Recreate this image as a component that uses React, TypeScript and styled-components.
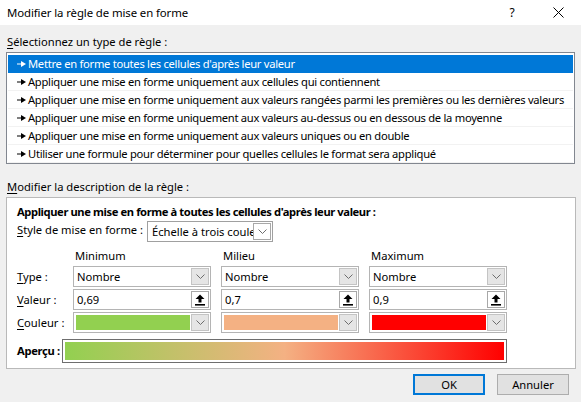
import React from "react";
import styled, { createGlobalStyle } from "styled-components";

const FONT = `"Noto Sans", "Liberation Sans", sans-serif`;

const Global = createGlobalStyle`
  html, body { margin: 0; padding: 0; background: #f0f0f0; }
  body { font-family: ${FONT}; font-size: 11.2px; color: #000; }
  * { box-sizing: border-box; }
`;

const Dialog = styled.div`
  width: 581px;
  height: 402px;
  display: flex;
  flex-direction: column;
  background: #f0f0f0;
  overflow: hidden;
`;

const TitleBar = styled.div`
  height: 25px;
  flex-shrink: 0;
  background: #fff;
  display: flex;
  align-items: center;
  padding-left: 7px;
`;

const Title = styled.div`
  flex: 1;
  font-size: 11.4px;
  letter-spacing: -0.1px;
  line-height: 16px;
`;

const TitleButton = styled.div`
  width: 46px;
  height: 25px;
  display: flex;
  align-items: center;
  justify-content: center;
  font-size: 12px;
`;

const Body = styled.div`
  display: flex;
  flex-direction: column;
  padding: 0 5px 0 6px;
`;

const SectionLabel = styled.div<{ $top: number }>`
  margin-top: ${(p) => p.$top}px;
  padding-left: 1px;
  line-height: 16px;
  height: 16px;
  white-space: nowrap;
`;

const ListBox = styled.div`
  margin-top: 2px;
  margin-right: 1px;
  height: 112px;
  background: #fff;
  border: 1px solid #828790;
  padding: 2px 1px 1px 1px;
  display: flex;
  flex-direction: column;
`;

const ListRow = styled.div<{ $selected?: boolean }>`
  height: 18px;
  flex-shrink: 0;
  display: flex;
  align-items: center;
  gap: 2px;
  padding-left: 9px;
  white-space: nowrap;
  overflow: hidden;
  letter-spacing: -0.28px;
  background: ${(p) => (p.$selected ? "#0078d7" : "#fff")};
  color: ${(p) => (p.$selected ? "#fff" : "#000")};
  border-bottom: 1px solid ${(p) => (p.$selected ? "#0078d7" : "#f2f2f2")};
  line-height: 16px;
`;

const Group = styled.div`
  margin-top: 2px;
  height: 172px;
  background: #fff;
  border: 1px solid #b9b9b9;
  padding: 6px 0 0 10px;
  display: flex;
  flex-direction: column;
`;

const GroupTitle = styled.div`
  font-weight: bold;
  letter-spacing: -0.4px;
  line-height: 16px;
  height: 16px;
  white-space: nowrap;
`;

const StyleRow = styled.div`
  margin-top: 1px;
  display: flex;
  align-items: center;
  height: 21px;
`;

const StyleLabel = styled.div`
  width: 130px;
  line-height: 16px;
  margin-top: -3px;
  white-space: nowrap;
`;

const Select = styled.div`
  width: 126px;
  height: 21px;
  border: 1px solid #a0a0a0;
  background: #fff;
  display: flex;
  align-items: center;
  overflow: hidden;
`;

const SelectText = styled.div`
  flex: 1;
  overflow: hidden;
  white-space: nowrap;
  padding-left: 4px;
  line-height: 16px;
`;

const ArrowBox = styled.div<{ $tone?: "gray" | "white" }>`
  width: 18px;
  height: 17px;
  flex-shrink: 0;
  margin-right: 1px;
  display: flex;
  align-items: center;
  justify-content: center;
  background: ${(p) => (p.$tone === "white" ? "#fff" : "#e5e5e5")};
  border: 1px solid ${(p) => (p.$tone === "white" ? "#a8a8a8" : "#c4c4c4")};
`;

const Grid = styled.div`
  margin-top: 5px;
  display: grid;
  grid-template-columns: 46px repeat(3, 138px);
  grid-template-rows: 17px 21px 21px 21px;
  column-gap: 10px;
  row-gap: 2px;
  align-items: center;
`;

const ColHead = styled.div`
  padding-left: 2px;
  line-height: 16px;
`;

const RowLabel = styled.div`
  line-height: 16px;
  white-space: nowrap;
`;

const Field = styled.div`
  height: 21px;
  border: 1px solid #b4b4b4;
  background: #fff;
  display: flex;
  align-items: center;
`;

const FieldText = styled.div`
  flex: 1;
  padding-left: 3px;
  line-height: 16px;
  white-space: nowrap;
  overflow: hidden;
`;

const Swatch = styled.div<{ $color: string }>`
  flex: 1;
  align-self: stretch;
  margin: 2px 1px 2px 2px;
  background: ${(p) => p.$color};
`;

const PreviewRow = styled.div`
  margin-top: 6px;
  display: flex;
  align-items: center;
  height: 24px;
`;

const PreviewLabel = styled.div`
  width: 45px;
  flex-shrink: 0;
  font-weight: bold;
  letter-spacing: -0.3px;
  line-height: 16px;
  white-space: nowrap;
`;

const PreviewBox = styled.div`
  width: 445px;
  height: 24px;
  border: 1px solid #6e6e6e;
  padding: 2px;
  background: #fff;
`;

const Gradient = styled.div`
  width: 100%;
  height: 100%;
  background: linear-gradient(to right, #92d050 0%, #f4b183 50%, #ff0000 100%);
`;

const ButtonRow = styled.div`
  margin-top: 5px;
  display: flex;
  justify-content: flex-end;
  gap: 12px;
  padding-right: 7px;
`;

const Button = styled.div<{ $primary?: boolean }>`
  width: 72px;
  height: 21px;
  display: flex;
  align-items: center;
  justify-content: center;
  background: #e1e1e1;
  border: ${(p) => (p.$primary ? "2px solid #0078d7" : "1px solid #adadad")};
  line-height: 16px;
`;

const U = styled.span`
  text-decoration: underline;
  text-underline-offset: 2px;
`;

const Pointer = () => (
  <svg width="9" height="6" viewBox="0 0 9 6" style={{ flexShrink: 0 }}>
    <rect x="0" y="2.5" width="5" height="1" fill="currentColor" />
    <path d="M4 0 L9 3 L4 6 Z" fill="currentColor" />
  </svg>
);

const Chevron = () => (
  <svg width="9" height="5" viewBox="0 0 9 5">
    <path d="M0.5 0.5 L4.5 4.5 L8.5 0.5" stroke="#6d6d6d" strokeWidth="1" fill="none" />
  </svg>
);

const UpArrow = () => (
  <svg width="10" height="12" viewBox="0 0 10 12">
    <path d="M5 0.5 L9.5 5 H6.5 V8.5 H3.5 V5 H0.5 Z" fill="#000" />
    <rect x="0" y="10" width="10" height="1.6" fill="#000" />
  </svg>
);

const CloseIcon = () => (
  <svg width="11" height="11" viewBox="0 0 11 11">
    <path d="M0.5 0.5 L10.5 10.5 M10.5 0.5 L0.5 10.5" stroke="#000" strokeWidth="1" />
  </svg>
);

const rules = [
  "Mettre en forme toutes les cellules d'après leur valeur",
  "Appliquer une mise en forme uniquement aux cellules qui contiennent",
  "Appliquer une mise en forme uniquement aux valeurs rangées parmi les premières ou les dernières valeurs",
  "Appliquer une mise en forme uniquement aux valeurs au-dessus ou en dessous de la moyenne",
  "Appliquer une mise en forme uniquement aux valeurs uniques ou en double",
  "Utiliser une formule pour déterminer pour quelles cellules le format sera appliqué",
];

const cols = [
  { head: "Minimum", value: "0,69", color: "#92d050" },
  { head: "Milieu", value: "0,7", color: "#f4b183" },
  { head: "Maximum", value: "0,9", color: "#ff0000" },
];

export default function App() {
  return (
    <>
      <Global />
      <Dialog>
        <TitleBar>
          <Title>Modifier la règle de mise en forme</Title>
          <TitleButton>?</TitleButton>
          <TitleButton>
            <CloseIcon />
          </TitleButton>
        </TitleBar>
        <Body>
          <SectionLabel $top={9}>
            <U>S</U>électionnez un type de règle :
          </SectionLabel>
          <ListBox>
            {rules.map((r, i) => (
              <ListRow key={i} $selected={i === 0}>
                <Pointer />
                <span>{r}</span>
              </ListRow>
            ))}
          </ListBox>
          <SectionLabel $top={15}>
            <U>M</U>odifier la description de la règle :
          </SectionLabel>
          <Group>
            <GroupTitle>Appliquer une mise en forme à toutes les cellules d'après leur valeur :</GroupTitle>
            <StyleRow>
              <StyleLabel>
                <U>S</U>tyle de mise en forme :
              </StyleLabel>
              <Select>
                <SelectText>Échelle à trois couleurs</SelectText>
                <ArrowBox $tone="white">
                  <Chevron />
                </ArrowBox>
              </Select>
            </StyleRow>
            <Grid>
              <div />
              {cols.map((c) => (
                <ColHead key={c.head}>{c.head}</ColHead>
              ))}
              <RowLabel>
                <U>T</U>ype :
              </RowLabel>
              {cols.map((c) => (
                <Field key={c.head}>
                  <FieldText>Nombre</FieldText>
                  <ArrowBox>
                    <Chevron />
                  </ArrowBox>
                </Field>
              ))}
              <RowLabel>
                <U>V</U>aleur :
              </RowLabel>
              {cols.map((c) => (
                <Field key={c.head}>
                  <FieldText>{c.value}</FieldText>
                  <ArrowBox $tone="white">
                    <UpArrow />
                  </ArrowBox>
                </Field>
              ))}
              <RowLabel>
                <U>C</U>ouleur :
              </RowLabel>
              {cols.map((c) => (
                <Field key={c.head}>
                  <Swatch $color={c.color} />
                  <ArrowBox>
                    <Chevron />
                  </ArrowBox>
                </Field>
              ))}
            </Grid>
            <PreviewRow>
              <PreviewLabel>Aperçu :</PreviewLabel>
              <PreviewBox>
                <Gradient />
              </PreviewBox>
            </PreviewRow>
          </Group>
          <ButtonRow>
            <Button $primary>OK</Button>
            <Button>Annuler</Button>
          </ButtonRow>
        </Body>
      </Dialog>
    </>
  );
}
